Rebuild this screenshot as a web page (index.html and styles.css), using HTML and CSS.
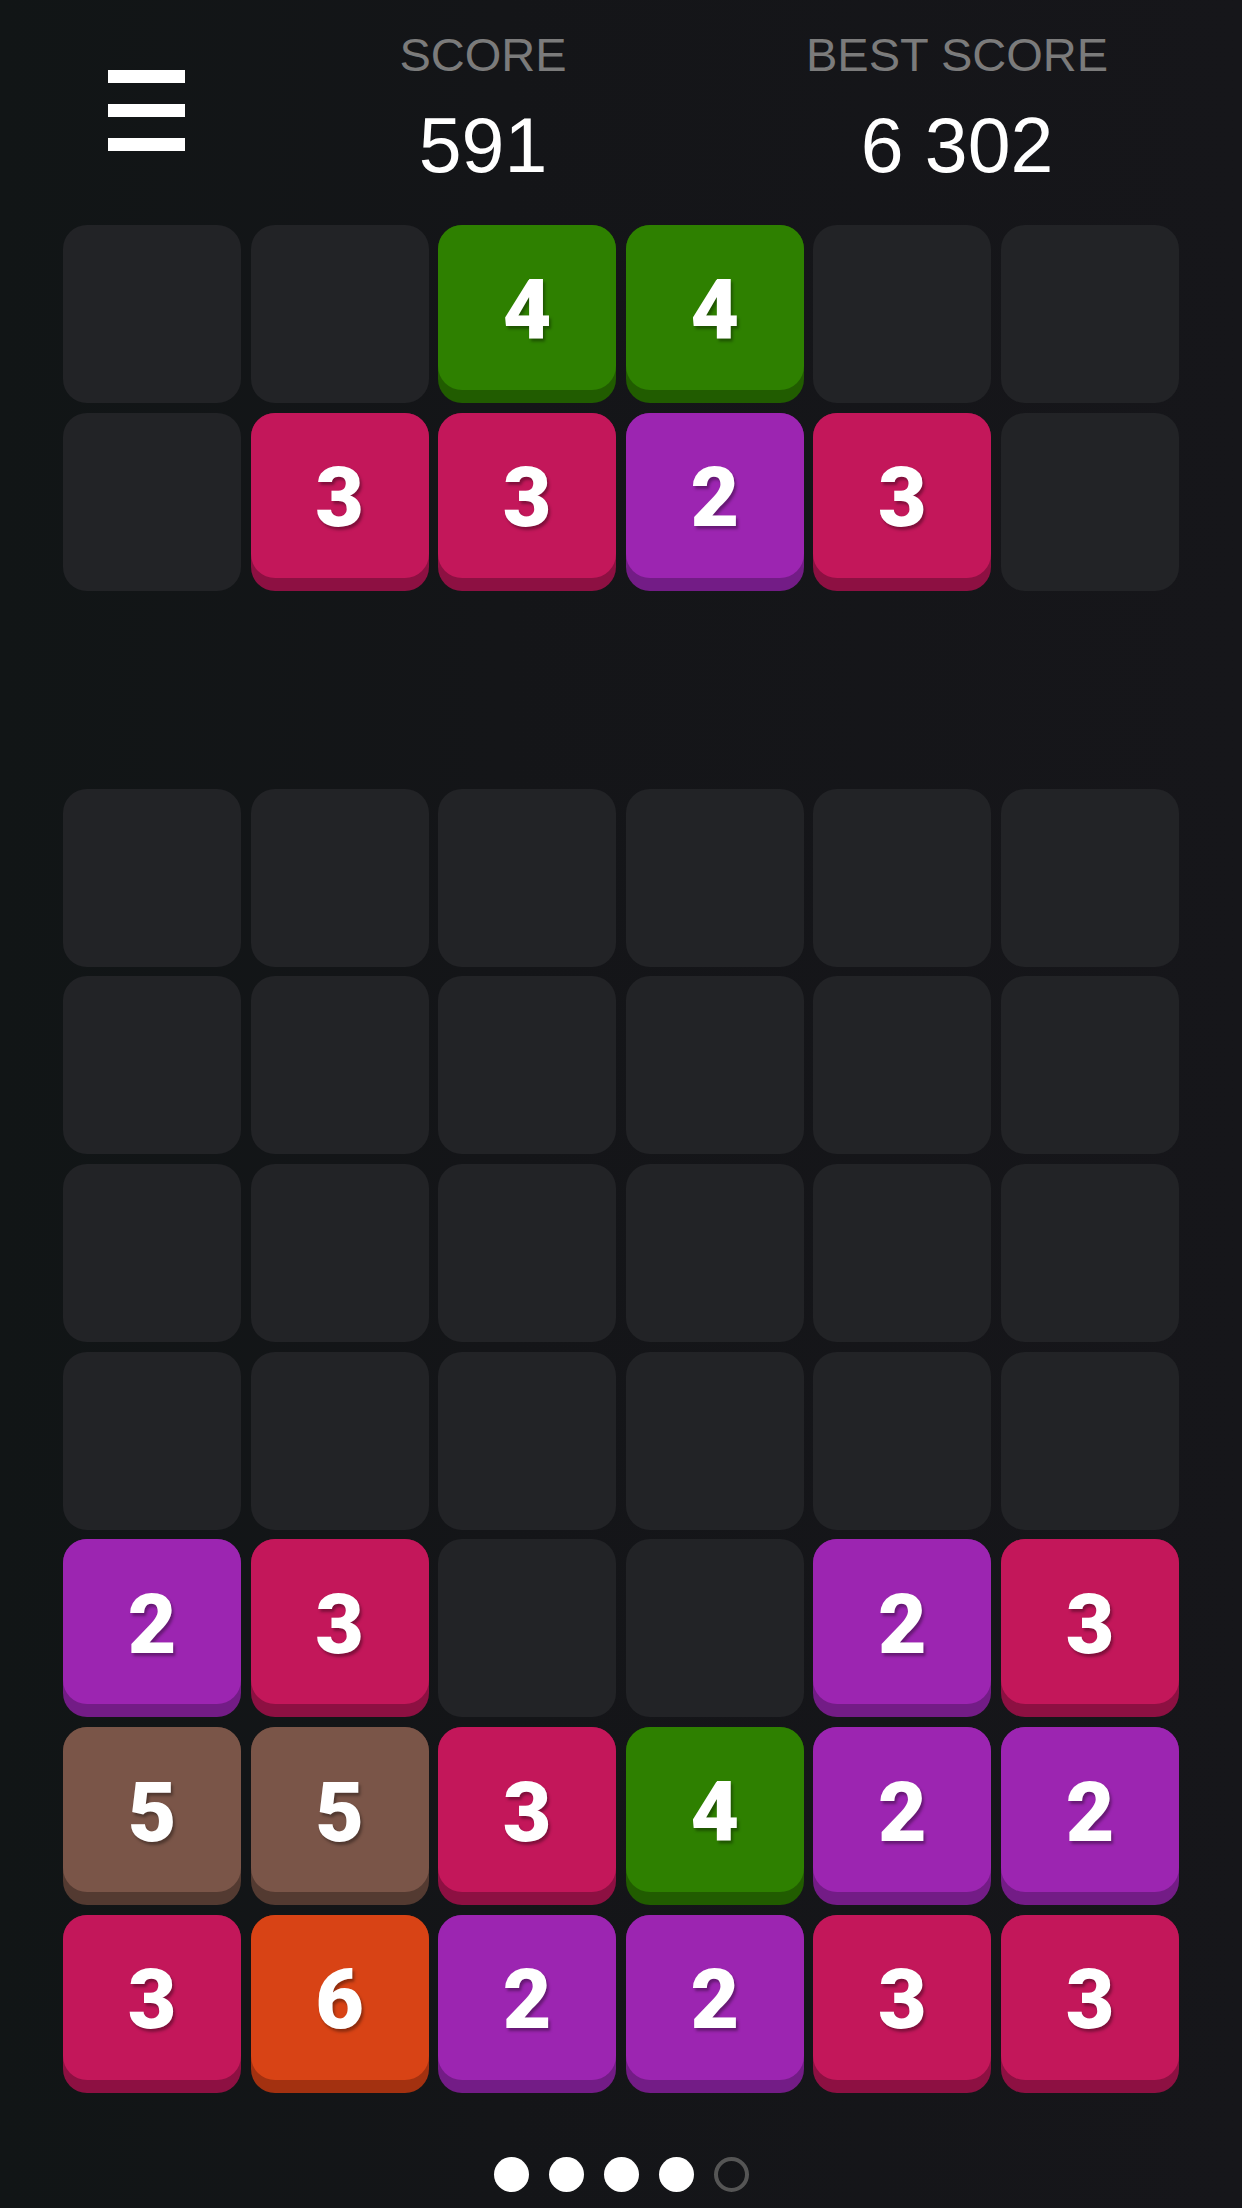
FILE: index.html
```html
<!DOCTYPE html>
<html lang="en">
<head>
    <meta charset="UTF-8">
    <meta name="viewport" content="width=device-width, initial-scale=1.0">
    <title>Merge Blocks</title>
    <link rel="stylesheet" href="styles.css">
</head>
<body>
    <div class="header">
        <div class="menu">
            <div class="burger">
                <span></span>
                <span></span>
                <span></span>
            </div>
        </div>
        <div class="stat">
            <div class="stat-label">SCORE</div>
            <div class="stat-value">591</div>
        </div>
        <div class="stat">
            <div class="stat-label">BEST SCORE</div>
            <div class="stat-value">6 302</div>
        </div>
    </div>

    <div class="board board-next">
        <div class="cell"></div>
        <div class="cell"></div>
        <div class="tile t4"><div class="face">4</div></div>
        <div class="tile t4"><div class="face">4</div></div>
        <div class="cell"></div>
        <div class="cell"></div>

        <div class="cell"></div>
        <div class="tile t3"><div class="face">3</div></div>
        <div class="tile t3"><div class="face">3</div></div>
        <div class="tile t2"><div class="face">2</div></div>
        <div class="tile t3"><div class="face">3</div></div>
        <div class="cell"></div>
    </div>

    <div class="board board-main">
        <div class="cell"></div><div class="cell"></div><div class="cell"></div>
        <div class="cell"></div><div class="cell"></div><div class="cell"></div>

        <div class="cell"></div><div class="cell"></div><div class="cell"></div>
        <div class="cell"></div><div class="cell"></div><div class="cell"></div>

        <div class="cell"></div><div class="cell"></div><div class="cell"></div>
        <div class="cell"></div><div class="cell"></div><div class="cell"></div>

        <div class="cell"></div><div class="cell"></div><div class="cell"></div>
        <div class="cell"></div><div class="cell"></div><div class="cell"></div>

        <div class="tile t2"><div class="face">2</div></div>
        <div class="tile t3"><div class="face">3</div></div>
        <div class="cell"></div>
        <div class="cell"></div>
        <div class="tile t2"><div class="face">2</div></div>
        <div class="tile t3"><div class="face">3</div></div>

        <div class="tile t5"><div class="face">5</div></div>
        <div class="tile t5"><div class="face">5</div></div>
        <div class="tile t3"><div class="face">3</div></div>
        <div class="tile t4"><div class="face">4</div></div>
        <div class="tile t2"><div class="face">2</div></div>
        <div class="tile t2"><div class="face">2</div></div>

        <div class="tile t3"><div class="face">3</div></div>
        <div class="tile t6"><div class="face">6</div></div>
        <div class="tile t2"><div class="face">2</div></div>
        <div class="tile t2"><div class="face">2</div></div>
        <div class="tile t3"><div class="face">3</div></div>
        <div class="tile t3"><div class="face">3</div></div>
    </div>

    <div class="pager">
        <span class="dot"></span>
        <span class="dot"></span>
        <span class="dot"></span>
        <span class="dot"></span>
        <span class="dot dot-empty"></span>
    </div>
</body>
</html>
```

FILE: styles.css
```css
body {
    margin: 0;
    width: 1242px;
    height: 2208px;
    overflow: hidden;
    background: linear-gradient(90deg, #111516 0%, #141518 40%, #16161a 100%);
    font-family: "Liberation Sans", Arial, sans-serif;
    color: #fff;
}
.header {
    display: flex;
    height: 225px;
    box-sizing: border-box;
    padding-top: 28px;
}
.menu {
    width: 246px;
    padding-left: 108px;
    padding-top: 42px;
    box-sizing: border-box;
}
.burger {
    display: flex;
    flex-direction: column;
    gap: 21px;
    width: 77px;
}
.burger span {
    display: block;
    height: 13px;
    background-color: #fff;
}
.stat {
    width: 474px;
    text-align: center;
}
.stat-label {
    font-size: 47px;
    line-height: 54px;
    color: #7b7b7b;
}
.stat-value {
    margin-top: 19px;
    font-size: 77px;
    line-height: 88px;
    color: #fff;
}
.board {
    display: grid;
    grid-template-columns: repeat(6, 178px);
    grid-auto-rows: 178px;
    column-gap: 9.6px;
    row-gap: 9.7px;
    margin-left: 63px;
}
.board-main {
    margin-top: 198px;
}
.cell {
    background-color: #222326;
    border-radius: 24px;
}
.tile {
    border-radius: 24px;
}
.face {
    height: 165px;
    box-sizing: border-box;
    padding-top: 5px;
    border-radius: 24px;
    display: flex;
    align-items: center;
    justify-content: center;
    font-family: Roboto, "Liberation Sans", sans-serif;
    font-weight: 900;
    font-size: 84px;
    color: #fff;
    text-shadow: 2px 3px 3px rgba(0, 0, 0, 0.35);
}
.t2 { background-color: #731c86; }
.t2 .face { background-color: #9c25b1; }
.t3 { background-color: #8d1042; }
.t3 .face { background-color: #c3175a; }
.t4 { background-color: #215c00; }
.t4 .face { background-color: #2e8000; }
.t5 { background-color: #533a31; }
.t5 .face { background-color: #7a5548; }
.t6 { background-color: #a33110; }
.t6 .face { background-color: #d84315; }
.pager {
    display: flex;
    justify-content: center;
    gap: 20px;
    margin-top: 64px;
}
.dot {
    width: 35px;
    height: 35px;
    border-radius: 50%;
    background-color: #fff;
    box-sizing: border-box;
}
.dot-empty {
    background-color: transparent;
    border: 4px solid #555;
}
```
